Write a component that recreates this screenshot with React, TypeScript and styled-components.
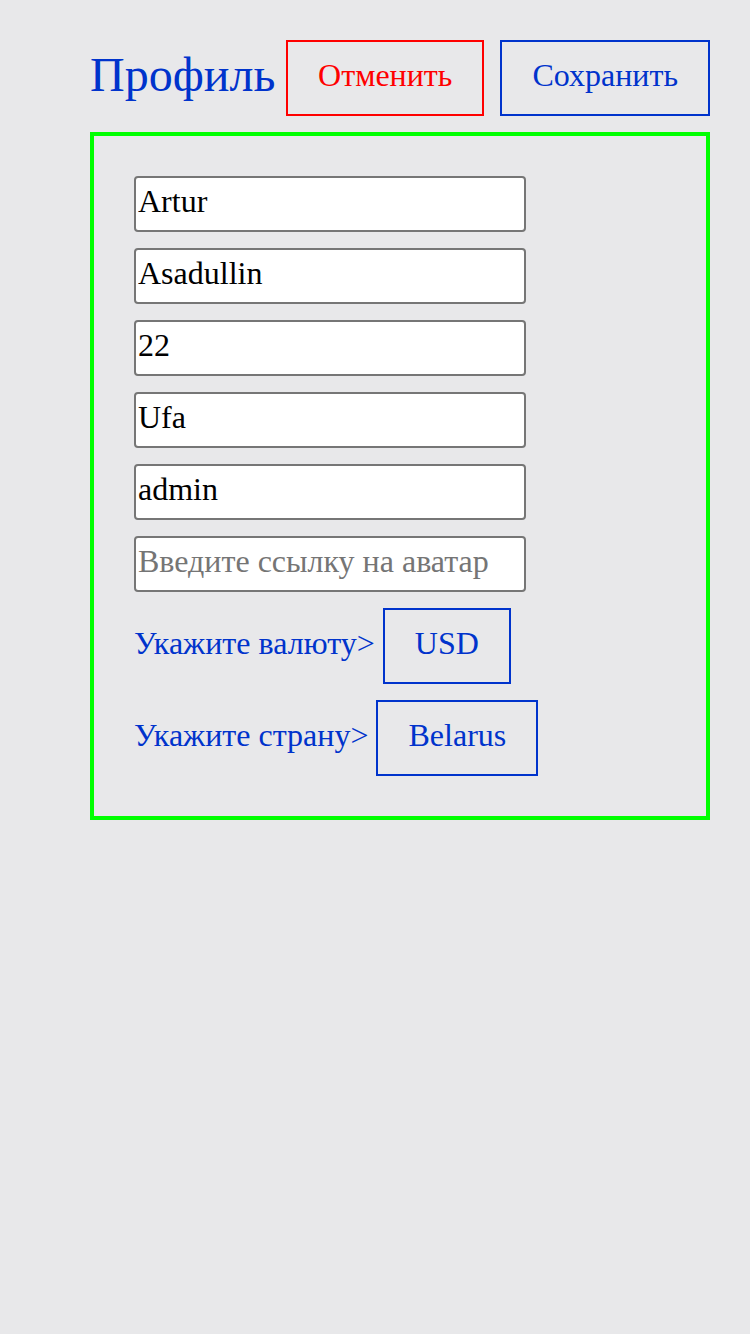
import React from 'react';
import styled, { createGlobalStyle } from 'styled-components';

const GlobalStyle = createGlobalStyle`
  html, body {
    margin: 0;
    padding: 0;
    background: #e8e8ea;
    font-family: "Liberation Serif", "Times New Roman", serif;
  }
`

const Page = styled.div`
  width: 620px;
  margin-left: 90px;
  padding-top: 40px;
`

const Header = styled.div`
  display: flex;
  align-items: center;
  justify-content: space-between;
  margin-bottom: 16px;
`

const Title = styled.h1`
  margin: 0;
  padding-bottom: 8px;
  font-size: 48px;
  font-weight: normal;
  color: #0033cc;
`

const Actions = styled.div`
  display: flex;
  gap: 16px;
`

const Button = styled.button<{ $color: string }>`
  height: 76px;
  padding: 0 30px 6px;
  background: transparent;
  border: 2px solid ${(p) => p.$color};
  color: ${(p) => p.$color};
  font-family: "Liberation Serif", "Times New Roman", serif;
  font-size: 32px;
  cursor: pointer;
`

const Card = styled.div`
  border: 4px solid #00ff00;
  padding: 40px;
  display: flex;
  flex-direction: column;
  gap: 16px;
`

const Input = styled.input`
  width: 392px;
  height: 56px;
  box-sizing: border-box;
  padding: 0 2px 6px;
  border: 2px solid #767676;
  border-radius: 4px;
  background: #fff;
  font-family: "Liberation Serif", "Times New Roman", serif;
  font-size: 32px;
  color: #000;
  &::placeholder {
    color: #757575;
  }
`

const SelectRow = styled.div`
  display: flex;
  align-items: center;
  gap: 8px;
`

const Label = styled.span`
  padding-bottom: 6px;
  font-size: 32px;
  color: #0033cc;
`

export default function App() {
  return (
    <>
      <GlobalStyle />
      <Page>
        <Header>
          <Title>Профиль</Title>
          <Actions>
            <Button $color="#ff0000">Отменить</Button>
            <Button $color="#0033cc">Сохранить</Button>
          </Actions>
        </Header>
        <Card>
          <Input defaultValue="Artur" />
          <Input defaultValue="Asadullin" />
          <Input defaultValue="22" />
          <Input defaultValue="Ufa" />
          <Input defaultValue="admin" />
          <Input placeholder="Введите ссылку на аватар" />
          <SelectRow>
            <Label>Укажите валюту&gt;</Label>
            <Button $color="#0033cc">USD</Button>
          </SelectRow>
          <SelectRow>
            <Label>Укажите страну&gt;</Label>
            <Button $color="#0033cc">Belarus</Button>
          </SelectRow>
        </Card>
      </Page>
    </>
  );
}
